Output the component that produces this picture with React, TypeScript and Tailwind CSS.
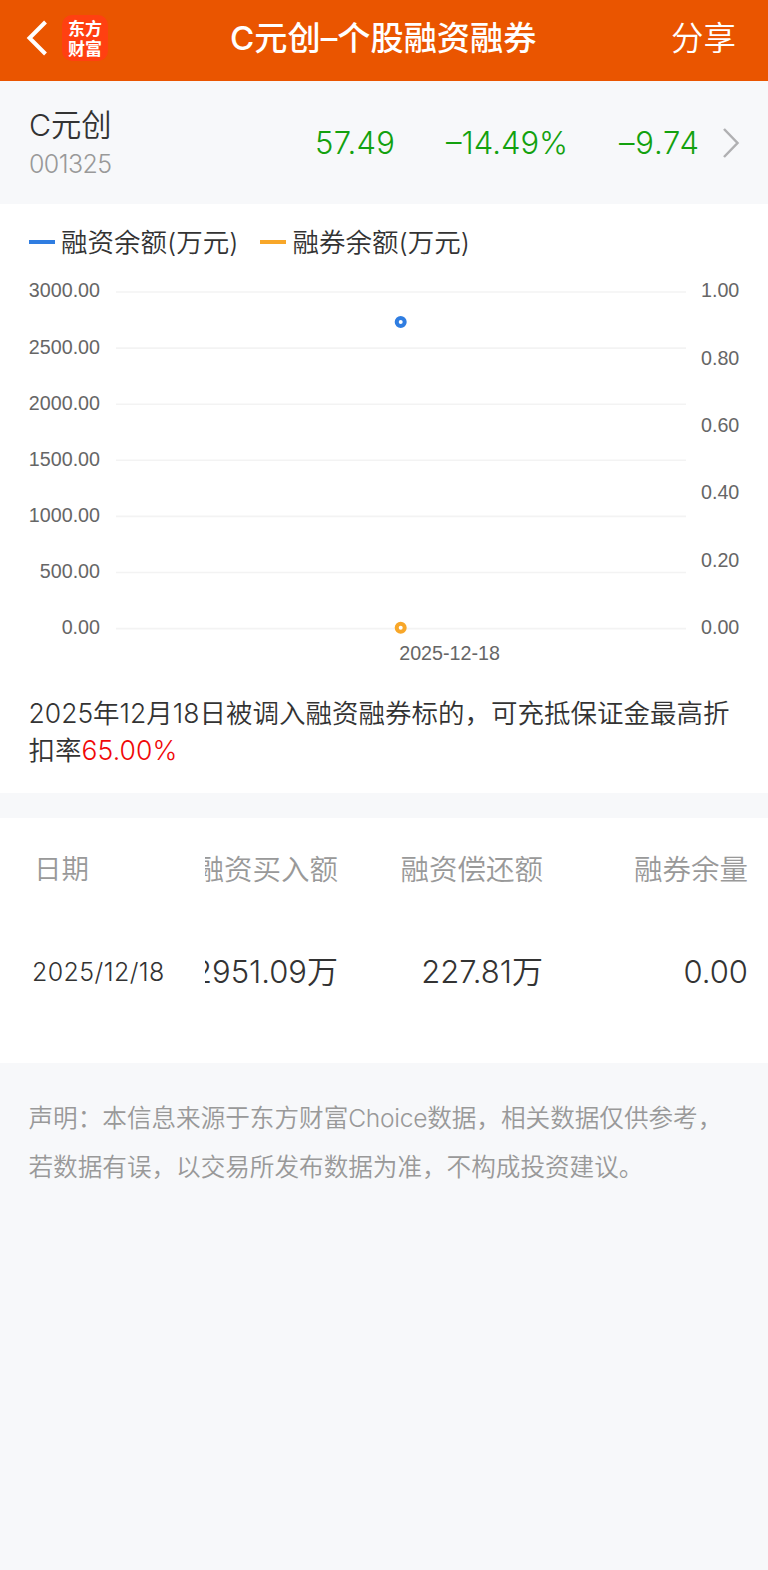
const SANS = "font-[Inter,'Noto_Sans_CJK_SC',sans-serif] font-[350]";

const LEFT_TICKS = ['3000.00', '2500.00', '2000.00', '1500.00', '1000.00', '500.00', '0.00'];
const RIGHT_TICKS = ['1.00', '0.80', '0.60', '0.40', '0.20', '0.00'];

const LEGEND = [
  { label: '融资余额(万元)', bar: 'bg-[#2f7de1]' },
  { label: '融券余额(万元)', bar: 'bg-[#f8a729]' },
];

const COLUMNS = [
  { title: '融资买入额', value: '2951.09', unit: '万', width: 'w-[133px]' },
  { title: '融资偿还额', value: '227.81', unit: '万', width: 'w-[205px]' },
  { title: '融券余量', value: '0.00', unit: '', width: 'w-[205px]' },
];

function Header() {
  return (
    <header className="flex h-[81px] items-center bg-[#ea5500] pb-[5px] text-white">
      <div className="flex w-[230px] items-center pl-[26px]">
        <svg width="22" height="36" viewBox="0 0 22 36" fill="none" stroke="currentColor" strokeWidth="4">
          <path d="M19.5 2 3.5 18l16 16" />
        </svg>
        <div className="ml-[14px] flex h-[46px] w-[46px] items-center justify-center rounded-[10px] bg-[#ff4011] pb-px font-['Noto_Sans_CJK_SC',sans-serif] text-[17px] leading-[20px] font-bold">
          <p>
            东方
            <br />
            财富
          </p>
        </div>
      </div>
      <h1 className="flex-1 text-[33.2px] leading-[40px] font-medium whitespace-nowrap">C元创–个股融资融券</h1>
      <button className="pt-px pr-[32px] text-[32.5px] leading-[40px] whitespace-nowrap">分享</button>
    </header>
  );
}

function Quote() {
  return (
    <section className="flex h-[123px] items-center bg-[#f7f8fa] pl-[29px]">
      <div className="w-[286px] pt-[2px]">
        <div className="text-[30.3px] leading-[40px] text-[#333]">C元创</div>
        <div className="pt-px text-[25px] leading-[36px] tracking-[-0.6px] text-[#999]">001325</div>
      </div>
      <div className="flex pt-px text-[31px] whitespace-nowrap text-[#13a10e]">
        <span className="w-[131px] tracking-[0.3px]">57.49</span>
        <span className="w-[173px]">–14.49%</span>
        <span className="w-[103px] tracking-[0.8px]">–9.74</span>
      </div>
      <svg width="18" height="32" viewBox="0 0 18 32" fill="none" stroke="#b0b0b2" strokeWidth="2.5">
        <path d="M2 2l13.5 14L2 30" />
      </svg>
    </section>
  );
}

function Chart() {
  return (
    <svg
      width="768"
      height="400"
      viewBox="0 0 768 400"
      className="block font-['Liberation_Sans',Arial,sans-serif] text-[19.7px]"
      fill="#666"
    >
      {LEFT_TICKS.map((tick, i) => (
        <g key={tick}>
          <line x1="116" x2="686" y1={11 + i * 56.1} y2={11 + i * 56.1} stroke="#f3f3f3" strokeWidth="1.6" />
          <text x="100" y={16.4 + i * 56.1} textAnchor="end">{tick}</text>
        </g>
      ))}
      {RIGHT_TICKS.map((tick, i) => (
        <text key={tick} x="701" y={16.4 + i * 67.3}>{tick}</text>
      ))}
      <circle cx="400.7" cy="41" r="4" fill="#fff" stroke="#2f7de1" strokeWidth="4" />
      <circle cx="400.7" cy="346.7" r="4" fill="#fff" stroke="#f8a729" strokeWidth="4" />
      <text x="399.2" y="378.7">2025-12-18</text>
    </svg>
  );
}

function Balance() {
  return (
    <section className="h-[589px] bg-white pt-[18px]">
      <div className="flex h-[40px] items-center gap-[22px] pl-[29px]">
        {LEGEND.map(item => (
          <div key={item.label} className="flex items-center gap-[6px]">
            <span className={`h-[4px] w-[26px] ${item.bar}`} />
            <span className="text-[26.5px] leading-[40px] whitespace-nowrap text-[#333]">{item.label}</span>
          </div>
        ))}
      </div>
      <div className="mt-[19px]">
        <Chart />
      </div>
      <p className="mt-[14px] pl-[28.5px] text-[26.5px] leading-[37px] whitespace-nowrap text-[#333]">
        2025年12月18日被调入融资融券标的，可充抵保证金最高折
        <br />
        扣率<span className="tracking-[0.1px] text-[#f00808]">65.00%</span>
      </p>
    </section>
  );
}

function Detail() {
  return (
    <section className="flex h-[245px] bg-white pt-px whitespace-nowrap">
      <div className="w-[205px] shrink-0">
        <div className="flex h-[102px] items-center pl-[34px] text-[27.5px] text-[#999]">日期</div>
        <div className="flex h-[102px] items-center pt-px pl-[32px] text-[25px] tracking-[0.4px] text-[#333]">2025/12/18</div>
      </div>
      <div className="flex overflow-hidden">
        {COLUMNS.map(col => (
          <div key={col.title} className={`shrink-0 ${col.width}`}>
            <div className="flex h-[102px] items-center justify-end text-[28.5px] text-[#999]">{col.title}</div>
            <div className="flex h-[102px] items-center justify-end text-[31px] text-[#333]">
              {col.value}
              {col.unit}
            </div>
          </div>
        ))}
      </div>
    </section>
  );
}

export default function App() {
  return (
    <div className={`h-[1570px] w-[768px] overflow-hidden bg-[#f7f8fa] ${SANS}`}>
      <Header />
      <Quote />
      <Balance />
      <div className="h-[25px]" />
      <Detail />
      <p className="pt-[31px] pl-[28.5px] text-[24.6px] leading-[49px] whitespace-nowrap text-[#999]">
        声明：本信息来源于东方财富<span className="tracking-[-0.3px]">Choice</span>数据，相关数据仅供参考，
        <br />
        若数据有误，以交易所发布数据为准，不构成投资建议。
      </p>
    </div>
  );
}
